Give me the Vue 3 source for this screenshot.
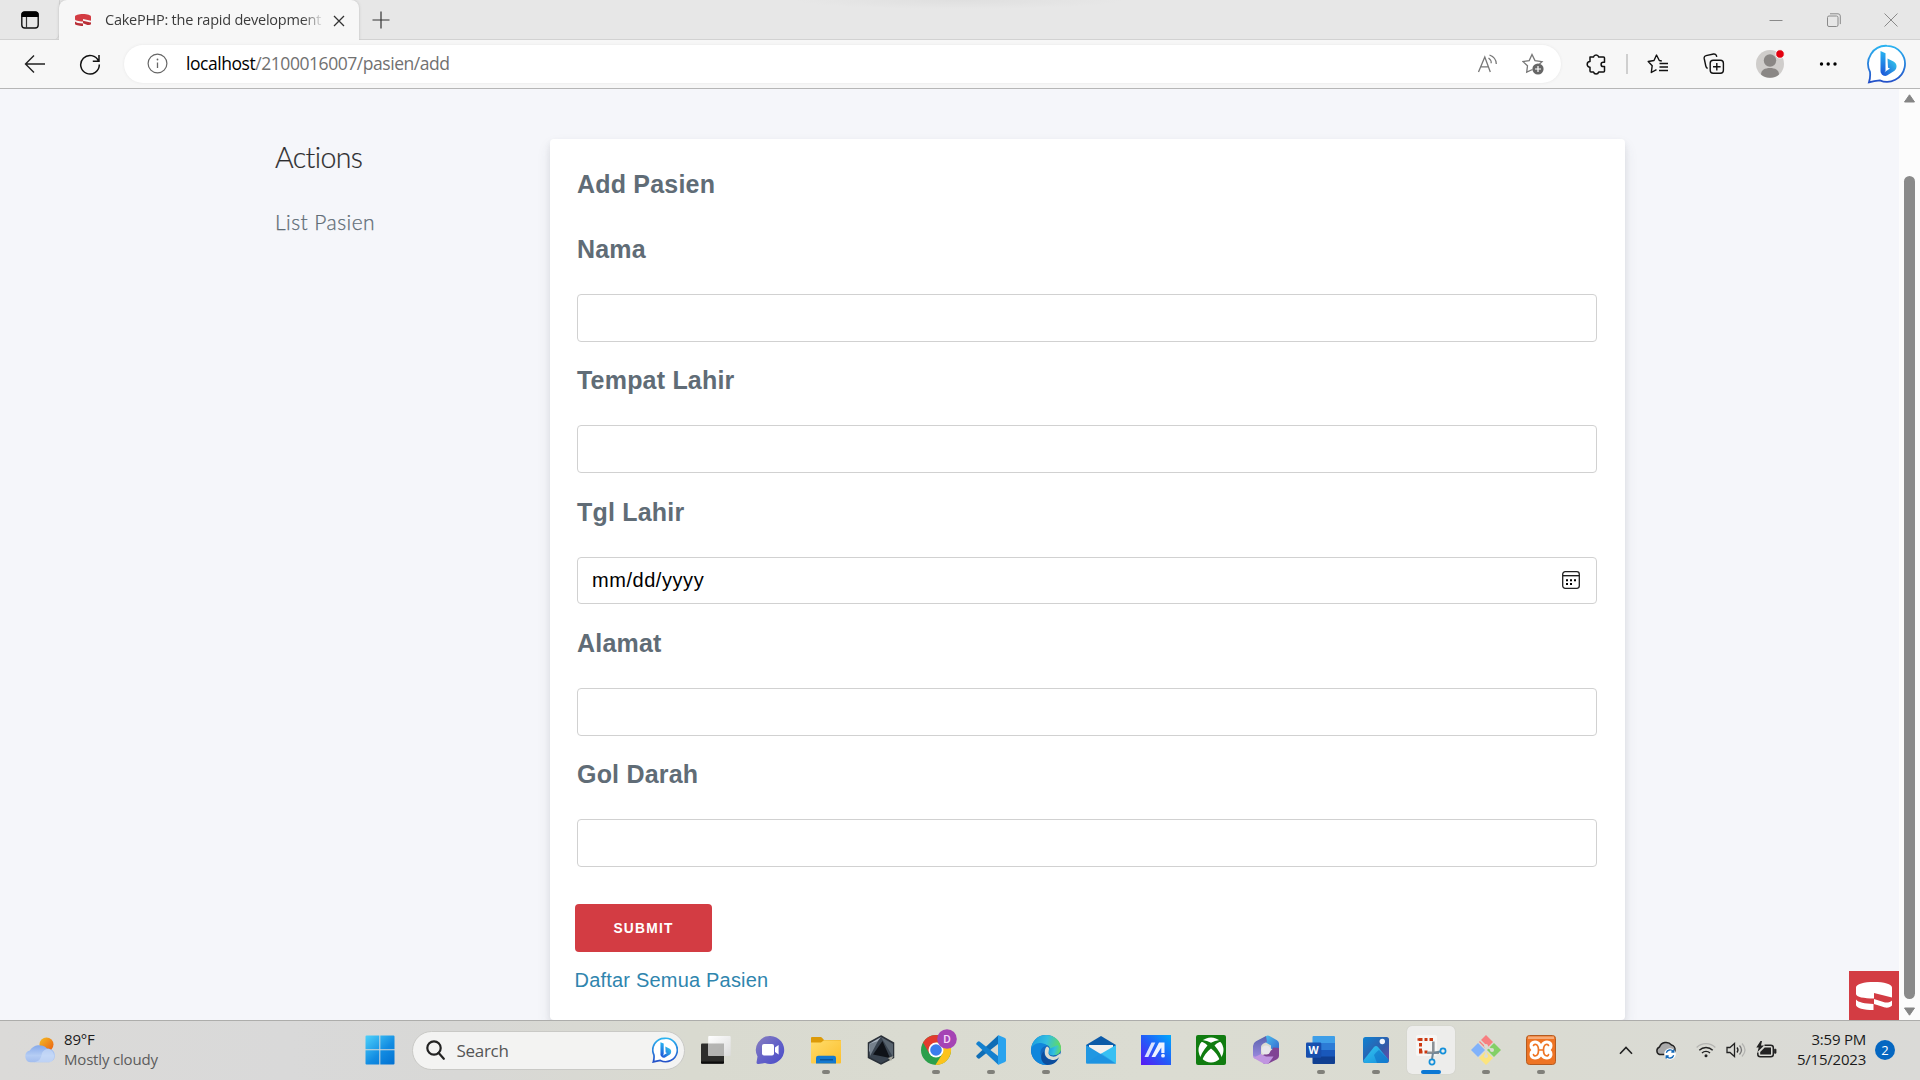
<script setup>
const fields = [
  { label: 'Nama', type: 'text' },
  { label: 'Tempat Lahir', type: 'text' },
  { label: 'Tgl Lahir', type: 'date' },
  { label: 'Alamat', type: 'text' },
  { label: 'Gol Darah', type: 'text' },
]
</script>

<template>
  <div class="screen">
    <header class="tabstrip">
      <div class="tab-menu">
        <svg width="20" height="20" viewBox="0 0 20 20"><rect x="1.8" y="2" width="16.4" height="16" rx="3" fill="none" stroke="#111" stroke-width="1.4"/><path d="M1.5 7V4.5A3 3 0 0 1 4.500 1.500h11A3 3 0 0 1 18.500 4.500V7z" fill="#000"/><path d="M6.500 7v11" stroke="#333" stroke-width="1.200"/></svg>
      </div>
      <div class="tab">
        <svg class="favicon" width="16" height="14" viewBox="0 0 36 27"><path fill="#d33c43" d="M18 0C8 0 0 2.500 0 6v6c0 3 8 5 18 5v-6l18 4V6c0-3.500-8-6-18-6z"/><path fill="#b92f37" d="M0 17c2 3 9 4.500 18 4.500V27C8 27 0 25 0 22zM18 15l17 4 1-1v5c-3 2-6 2-8 2l-10-4z"/></svg>
        <span class="tab-title">CakePHP: the rapid development</span>
        <svg class="tab-close" width="12" height="12" viewBox="0 0 12 12"><path d="M1 1l10 10M11 1L1 11" stroke="#333" stroke-width="1.300"/></svg>
      </div>
      <svg class="new-tab" width="18" height="18" viewBox="0 0 18 18"><path d="M9 .5v17M.5 9h17" stroke="#333" stroke-width="1.200"/></svg>
      <div class="window-controls">
        <svg width="14" height="14" viewBox="0 0 14 14"><path d="M.5 7.500h13" stroke="#8a8a8a"/></svg>
        <svg width="14" height="14" viewBox="0 0 14 14" fill="none" stroke="#8a8a8a"><rect x=".5" y="3" width="10.500" height="10.500" rx="1.500"/><path d="M3 .8h8a2.300 2.300 0 0 1 2.300 2.300v8"/></svg>
        <svg width="14" height="14" viewBox="0 0 14 14"><path d="M.5.5l13 13M13.500.5l-13 13" stroke="#8a8a8a"/></svg>
      </div>
    </header>

    <nav class="toolbar">
      <svg class="back" width="22" height="20" viewBox="0 0 22 20" fill="none" stroke="#222" stroke-width="1.400"><path d="M21 10H2M10 1.500L1.500 10 10 18.500"/></svg>
      <svg class="reload" width="22" height="22" viewBox="0 0 22 22" fill="none" stroke="#111" stroke-width="1.500"><path d="M19.600 8.200A9.300 9.300 0 1 0 20.300 11.500M20 2v6.200h-6.200"/></svg>
      <div class="address">
        <svg class="info" width="21" height="21" viewBox="0 0 21 21"><circle cx="10.500" cy="10.500" r="9.400" fill="none" stroke="#666" stroke-width="1.200"/><path d="M10.500 9.500v5.500" stroke="#666" stroke-width="1.300"/><circle cx="10.500" cy="6.500" r=".9" fill="#666"/></svg>
        <span class="url"><b>localhost</b>/2100016007/pasien/add</span>
        <svg class="read" width="22" height="20" viewBox="0 0 22 20" fill="none" stroke="#777" stroke-width="1.300"><path d="M1.500 18L7.800 3l5.500 15M3.800 12.800h7.600M11.500 4c2 1.300 2.800 3.200 2.700 5.300M12.500 1c4.500 1.700 6.800 4.600 6.800 9"/></svg>
        <svg class="fav-add" width="22" height="22" viewBox="0 0 22 22"><path d="M10.500 16.500l-5.800 2.700.8-6.400L1 8.600l6.200-1L10 1.500l3 6.100 7 1-2.500 2.300" fill="none" stroke="#777" stroke-width="1.300"/><circle cx="16" cy="16" r="5.600" fill="#666"/><path d="M16 13v6M13 16h6" stroke="#fff" stroke-width="1.200"/></svg>
      </div>
      <div class="tool puzzle"><svg width="20" height="22" viewBox="0 0 20 22" fill="none" stroke="#111" stroke-width="1.500" stroke-linejoin="round"><path d="M4 4h3.500a2.700 2.700 0 0 1 5.200 0H17.500a1 1 0 0 1 1 1v4.300h-1.300a2 2 0 0 0 0 4.200h1.300V18a1 1 0 0 1-1 1h-4.800a2.700 2.700 0 0 1-5.200 0H5a1 1 0 0 1-1-1v-3.800a2.800 2.800 0 0 1 0-5.600z"/></svg></div>
      <i class="divider"></i>
      <div class="tool star"><svg width="22" height="20" viewBox="0 0 22 20" fill="none" stroke="#111" stroke-width="1.400" stroke-linejoin="round"><path d="M14.800 7L12.300 6.500 9.500 1 7 6.500 1.200 7.500 5.200 11.700 4.300 18.500 9.500 15.600M12.500 9.500H21M12.500 13H21M12 16.500h9"/></svg></div>
      <div class="tool coll"><svg width="22" height="22" viewBox="0 0 22 22" fill="none" stroke="#111" stroke-width="1.400"><path d="M4.600 15.500C3.500 15 3 14 2.800 13L1.200 5.500a2.500 2.500 0 0 1 1.900-2.900L10.500 1a2.500 2.500 0 0 1 3 2l.3.900"/><rect x="7.200" y="7.300" width="13.200" height="13" rx="3"/><path d="M13.800 10v7.600M10 13.800h7.600"/></svg></div>
      <div class="tool avatar"><svg width="30" height="30" viewBox="0 0 30 30"><circle cx="15" cy="15" r="14" fill="#cfcdcb"/><circle cx="15" cy="11.500" r="6.200" fill="#8a8785"/><path d="M6 25.500c0-4.500 4-6.500 9-6.500s9 2 9 6.500a14 14 0 0 1-18 0z" fill="#8a8785"/><circle cx="25" cy="5" r="4.300" fill="#e3000f" stroke="#f7f7f7" stroke-width="1"/></svg></div>
      <div class="tool more"><svg width="18" height="6" viewBox="0 0 18 6"><circle cx="2.500" cy="3" r="1.700"/><circle cx="9.200" cy="3" r="1.700"/><circle cx="16" cy="3" r="1.700"/></svg></div>
      <div class="tool bing">
        <svg width="40" height="40" viewBox="0 0 40 40">
          <defs>
            <linearGradient id="ring" x1="0" y1="0" x2="0" y2="1"><stop offset="0" stop-color="#2bb3f0"/><stop offset="1" stop-color="#2450c8"/></linearGradient>
            <linearGradient id="bstem" x1="0" y1="0" x2="0" y2="1"><stop offset="0" stop-color="#27b5f2"/><stop offset="1" stop-color="#1c55d8"/></linearGradient>
            <linearGradient id="bbowl" x1="1" y1="0" x2="0" y2="1"><stop offset="0" stop-color="#35d0ee"/><stop offset="1" stop-color="#1b50d6"/></linearGradient>
          </defs>
          <path d="M20 1.800a18 18 0 1 1-7.200 34.500Q7 37 2 38.300q1.600-5 1-10.500A18 18 0 0 1 20 1.800z" fill="#fff" stroke="url(#ring)" stroke-width="1.800"/>
          <path d="M13.500 7l5 2.300v17l-2 4.700c-2-.5-3-2-3-4z" fill="url(#bstem)"/><path d="M20.500 14.500l6 3c4 2 3.800 7 1 9.300L20 31.500c-2 1-4 .3-5.500-1.500l8.500-5.500-2-.8z" fill="url(#bbowl)"/>
        </svg>
      </div>
    </nav>

    <main class="page">
      <div class="content">
        <aside>
          <h4>Actions</h4>
          <a>List Pasien</a>
        </aside>
        <section class="card">
          <h3>Add Pasien</h3>
          <div v-for="f in fields" :key="f.label" class="field">
            <label>{{ f.label }}</label>
            <div class="input" :class="f.type">
              <template v-if="f.type === 'date'">
                <span>mm/dd/yyyy</span>
                <svg width="18" height="18" viewBox="0 0 18 18"><rect x=".7" y=".7" width="16.600" height="16.600" rx="2.500" fill="none" stroke="#222" stroke-width="1.300"/><path d="M1 4.700h16" stroke="#111" stroke-width="1.300"/><path d="M4 8.200h2v2H4zM8 8.200h2v2H8zM12 8.200h2v2h-2zM4 12h2v2H4zM8 12h2v2H8z"/></svg>
              </template>
            </div>
          </div>
          <button>SUBMIT</button>
          <a class="all">Daftar Semua Pasien</a>
        </section>
      </div>
      <div class="debug">
        <svg width="36" height="28" viewBox="0 0 36 28"><path fill="#fff" d="M18 0C8 0 0 2 0 5.500V12c0 3 8 4.500 18 4.500V11l18 4.500V5.500C36 2 28 0 18 0z"/><path fill="#fff" d="M0 17.500c2 3 9 4 17.500 4.500v6C8 28 0 26 0 23zM18 17l11 3.500c3 .3 6-.5 7-2v5c-1 1.500-4 2.500-7 2L18 22z"/></svg>
      </div>
      <div class="scrollbar">
        <svg width="11" height="9" viewBox="0 0 11 9"><path d="M5.500.8L10.500 8H.5z" fill="#858585" stroke="#858585" stroke-linejoin="round"/></svg>
        <i></i>
        <svg width="11" height="9" viewBox="0 0 11 9"><path d="M5.500 8.200L.5 1h10z" fill="#858585" stroke="#858585" stroke-linejoin="round"/></svg>
      </div>
    </main>

    <footer class="taskbar">
      <div class="weather">
        <svg width="30" height="26" viewBox="0 0 30 26">
          <defs><linearGradient id="sun" x1="0" y1="0" x2="1" y2="1"><stop offset="0" stop-color="#f5bd22"/><stop offset="1" stop-color="#ea5b12"/></linearGradient><linearGradient id="cl" x1="0" y1="0" x2="0" y2="1"><stop offset="0" stop-color="#86a9ea"/><stop offset=".6" stop-color="#b5cdf4"/><stop offset="1" stop-color="#a3bdee"/></linearGradient></defs>
          <circle cx="21.500" cy="7.500" r="7" fill="url(#sun)"/><path d="M6 25.300a6 6 0 0 1-1.200-11.800A11 11 0 0 1 22 11.500c4 0 8 2.500 8 7s-3.500 6.800-7 6.800z" fill="url(#cl)"/><path d="M17 16c2-4 6-5 9-3 4 2.500 5 12.300-3 12.300H8c4 0 8-2 9-9.300z" fill="#cfdff9" opacity=".6"/>
        </svg>
        <div class="weather-text"><p class="temp">89°F</p><p class="sky">Mostly cloudy</p></div>
      </div>

      <div class="apps">
        <svg class="start" width="30" height="30" viewBox="0 0 30 30"><defs><linearGradient id="win" gradientUnits="userSpaceOnUse" x1="0" y1="0" x2="26" y2="30"><stop offset="0" stop-color="#4fd3fb"/><stop offset=".6" stop-color="#128ce2"/><stop offset="1" stop-color="#0373d3"/></linearGradient></defs><path fill="url(#win)" d="M1.500.5h12.800v13.800H.5V1.500a1 1 0 0 1 1-1zM15.300.5h13.200a1 1 0 0 1 1 1v12.800H15.300zM.5 15.300h13.800v14.200H1.500a1 1 0 0 1-1-1zM15.300 15.300h14.200v13.200a1 1 0 0 1-1 1H15.300z"/></svg>
        <div class="search">
          <svg width="19" height="20" viewBox="0 0 19 20" fill="none" stroke="#222" stroke-width="2.200"><circle cx="8" cy="8" r="6.700"/><path d="M12.500 12.800l5.300 6" stroke-linecap="round"/></svg>
          <span>Search</span>
          <svg width="26" height="26" viewBox="0 0 40 40"><path d="M20 2a18 18 0 1 1-7.200 34Q7 37 2 38.300q1.600-5 1-10.500A18 18 0 0 1 20 2z" fill="#fff" stroke="url(#ring)" stroke-width="2.600"/><path d="M13 8l5 2v16l-2 4.500c-2-.5-3-2-3-4z" fill="url(#bstem)"/><path d="M20.500 14.500l6 3c4 2 3.800 7 1 9.300L20 31.500c-2 1-4 .3-5.500-1.500l8.500-5.500-2-.8z" fill="url(#bbowl)"/></svg>
        </div>

        <!-- task view -->
        <div class="slot"><svg viewBox="0 0 48 48"><defs><linearGradient id="tv" x1="0" y1="0" x2="1" y2="1"><stop offset="0" stop-color="#fff"/><stop offset="1" stop-color="#dcdcdc"/></linearGradient></defs><rect x="9" y="17.500" width="23" height="20" rx="1" fill="#2d2d2b"/><path d="M9 35.500h23v1.300a1 1 0 0 1-1 1H10a1 1 0 0 1-1-1z" fill="#0c0c0c"/><rect x="16.200" y="10" width="22.500" height="20" rx="1" fill="url(#tv)"/><path d="M16.200 17.500H32V30H17a1 1 0 0 1-.8-1z" fill="#a9a9a7" opacity=".85"/></svg></div>
        <!-- chat -->
        <div class="slot"><svg viewBox="0 0 48 48"><defs><linearGradient id="ch" x1="0" y1="0" x2="1" y2="1"><stop offset="0" stop-color="#8a80bd"/><stop offset=".5" stop-color="#6462c8"/><stop offset="1" stop-color="#4a4cc8"/></linearGradient></defs><path d="M23.500 10a14 14 0 1 1-5.500 27l-6.500 1q-2 .2-2-1.500l1-6A14 14 0 0 1 23.500 10z" fill="url(#ch)"/><rect x="15" y="18" width="12" height="11.500" rx="2" fill="#fff"/><path d="M28 21.500l3.600-2.500v9.500L28 26z" fill="#fff"/></svg></div>
        <!-- file explorer -->
        <div class="slot"><svg viewBox="0 0 48 48"><defs><linearGradient id="fo" x1="0" y1="0" x2="1" y2="1"><stop offset="0" stop-color="#ffdc6b"/><stop offset="1" stop-color="#fcbf2c"/></linearGradient></defs><path d="M9 12q0-1 1-1h8.500q1 0 1.500.8L22 14h16q1 0 1 1v4H9z" fill="#dc9a08"/><path d="M9 16.500h10l3-2.300h17v22q0 1.300-1 1.300H10q-1 0-1-1.300z" fill="url(#fo)"/><path d="M14 37.500V32q0-2.300 2.300-2.300h15.400Q34 29.700 34 32v5.500z" fill="#1379cf"/><path d="M18 33.800h13" stroke="#0a4c90" stroke-width="1.200"/></svg><i></i></div>
        <!-- hexagon -->
        <div class="slot"><svg viewBox="0 0 48 48"><path d="M24 10l12.500 7v14.500L24 38l-12.500-6.500V17z" fill="#39434f" stroke="#2a3038" stroke-width="1.500"/><path d="M24 11l-12 7v8z" fill="#aab4c0"/><path d="M24 11l12 7v13z" fill="#59646f"/><path d="M12 18l9-3-8 15z" fill="#75808c"/><path d="M25.500 15l7.500 17-17-3.500z" fill="#0f1218"/><path d="M31 32l5.500-2-2.500 5z" fill="#a9a99f"/></svg></div>
        <!-- chrome -->
        <div class="slot"><svg viewBox="0 0 48 48"><circle cx="24" cy="24" r="15" fill="#2b9f4b"/><path d="M11 16.500a15 15 0 0 1 26 0H24l-6.500 11.250z" fill="#e33b2e"/><path d="M37 16.500A15 15 0 0 1 23.400 39l7.100-11.250L24 16.500z" fill="#fcc31b"/><circle cx="24" cy="24" r="7.500" fill="#fff"/><circle cx="24" cy="24" r="5.800" fill="#3b7ded"/><circle cx="35" cy="13" r="9.800" fill="#a543b4"/><text x="35" y="17" text-anchor="middle" font-family="Roboto, sans-serif" font-size="11.500" font-weight="500" fill="#f6d8fa">D</text></svg><i></i></div>
        <!-- vs code -->
        <div class="slot"><svg viewBox="0 0 48 48"><path d="M9.500 29.500L31 9.500v8.500L12.500 32.500q-1 .5-1.800-.3l-1.200-1.200q-.6-.8 0-1.500z" fill="#0f6db5"/><path d="M9.500 18.500L31 38.500V30L12.500 15.500q-1-.5-1.800.3l-1.200 1.200q-.6.800 0 1.500z" fill="#1380cf"/><path d="M31 9l7 3q1 .6 1 1.800v20.400q0 1.200-1 1.800l-7 3z" fill="#2aa3ee"/></svg><i></i></div>
        <!-- edge -->
        <div class="slot"><svg viewBox="0 0 48 48"><defs><linearGradient id="ed" x1="0" y1=".3" x2="1" y2=".5"><stop offset="0" stop-color="#1a9de0"/><stop offset=".5" stop-color="#33bfe0"/><stop offset="1" stop-color="#66dd58"/></linearGradient></defs><circle cx="24" cy="24" r="15" fill="#1268bf"/><path d="M9.200 22C10.500 13.500 17 9 24 9c9 0 15 6.500 15 13 0 5-4 7.500-8 7.200-3 0-4.500-1.500-4-2.700 2-2 1.500-7.500-4-8-6-.7-12 1.500-13.800 5.500z" fill="url(#ed)"/><path d="M9 24c.5-4.500 5-7.500 10-7 3 .3 5 1.500 6 3-6 0-8 6-5.500 11 2.500 5 8 6.500 13 5.300A15 15 0 0 1 9 24z" fill="#1086dc"/><path d="M25 20.500c3 1 3 5 1.700 6.500-.4 2.300 3 4.500 7.300 3.300l4.500-3 .5 3-2.200 1.500-2 2c-6 1.500-12-2-12-7 0-3 .5-5 2.200-6.300z" fill="#dcdcd2"/><path d="M26.500 26c-.4 2 1.200 3.200 4.500 3.200 4 0 8-2.200 8-7.200l-3-3-9 4z" fill="url(#ed)"/><path d="M22 25c0 7 5 9.500 10 9 3-.3 4.500-2 5-3.500-1.200 5-5.500 8.500-12 8.500-6-2-8-9-3-14z" fill="#0d4e9d"/></svg><i></i></div>
        <!-- mail -->
        <div class="slot"><svg viewBox="0 0 48 48"><path d="M24 10l15 9v4H9v-4z" fill="#0b5aa8"/><path d="M12 19h24v9l-12 6-12-6z" fill="#f2f0ee"/><path d="M9 19l30 18.500H10q-1 0-1-1z" fill="#2097e2"/><path d="M39 19v17.500q0 1-1 1L23.500 28z" fill="#37c0f3"/><path d="M9 37.500L24 27.500l15 10z" fill="#1c91e0" opacity=".75"/></svg></div>
        <!-- myasus -->
        <div class="slot"><svg viewBox="0 0 48 48"><defs><linearGradient id="ma" x1="0" y1="1" x2="1" y2="0"><stop offset="0" stop-color="#5a18f4"/><stop offset=".5" stop-color="#225cf8"/><stop offset="1" stop-color="#00a9fd"/></linearGradient></defs><path d="M9 9h30v30H9z" fill="url(#ma)"/><path d="M12.500 31l7-14.500h3.800l-7 14.500z" fill="#d9e3ff"/><path d="M19.500 31l7.500-14.500h5.500v10.500h-3.200v-5.500L23.300 31z" fill="#edf2ff"/><circle cx="31" cy="29.700" r="1.900" fill="#edf2ff"/></svg></div>
        <!-- xbox -->
        <div class="slot"><svg viewBox="0 0 48 48"><rect x="9" y="9" width="30" height="30" rx="2" fill="#107c10"/><circle cx="24" cy="24" r="12.500" fill="#fff"/><path d="M14.500 14.500q4-1 9.500 2.300Q29.500 13.500 33.500 14.500l1.500 1.500q-3-.8-7.500 3.500Q34 27 35 33l-2 1.500Q30 27 24 22.500 18 27 15 34.500L13 33q1-6 7.500-13.500-4.500-4.300-7.500-3.500z" fill="#107c10"/></svg></div>
        <!-- microsoft 365 -->
        <div class="slot"><svg viewBox="0 0 48 48"><defs><linearGradient id="m1" x1="0" y1="0" x2="1" y2="1"><stop offset="0" stop-color="#4cc0ee"/><stop offset="1" stop-color="#3360cc"/></linearGradient><linearGradient id="m2" x1="0" y1="0" x2="0" y2="1"><stop offset="0" stop-color="#5a62ae"/><stop offset="1" stop-color="#9c8be0"/></linearGradient></defs><path d="M24 10q2-1 4 .3l7 4q2 1.200 2 3.200v10l-8-5v-3l-6-3.500z" fill="url(#m1)"/><path d="M24 10l-10 5.300q-3 1.700-3 4.700v9.500q0 2 2 3.200l6-4.200V21q0-2 2-3.200l4-2z" fill="url(#m2)"/><path d="M37 22v8q0 2-2 3.200l-8.500 4.300q-2.500 1-5 0l-2-7.500 9.500-5.500q2-1 2-3z" fill="#804494"/><path d="M12.500 32.500q-1.500-1-1.500-3 1.500 2 4 .5l4-2 5 2.500 7.500 0-5 7q-2.500 1-5 0z" fill="#c095e0"/><circle cx="24" cy="24" r="4.600" fill="#e8e6ea"/></svg></div>
        <!-- word -->
        <div class="slot"><svg viewBox="0 0 48 48"><path d="M15.500 11q0-1 1-1H37q1 0 1 1v6.500H15.500z" fill="#3e9ee8"/><path d="M15.500 17h22.500v7H15.500z" fill="#2c7bd6"/><path d="M15.500 24h22.500v7H15.500z" fill="#1958bb"/><path d="M15.500 30.500h22.500V37q0 1-1 1H16.500q-1 0-1-1z" fill="#103f91"/><rect x="9" y="16.500" width="15.300" height="15.300" rx="1.300" fill="#184fae"/><text x="16.600" y="28" text-anchor="middle" font-family="Open Sans, sans-serif" font-weight="700" font-size="10.500" fill="#fff">W</text></svg><i></i></div>
        <!-- photos -->
        <div class="slot"><svg viewBox="0 0 48 48"><defs><linearGradient id="ph" x1="0" y1="0" x2="1" y2="1"><stop offset="0" stop-color="#0f82d2"/><stop offset=".6" stop-color="#325ba8"/><stop offset="1" stop-color="#6f4bab"/></linearGradient><linearGradient id="mo" x1="0" y1="0" x2="1" y2="1"><stop offset="0" stop-color="#35c5ef"/><stop offset="1" stop-color="#148ddc"/></linearGradient></defs><rect x="11" y="11" width="26" height="26" rx="2.500" fill="url(#ph)"/><path d="M11.300 34.500L22 21q2-2 4 0l10.800 13Q36.500 37 34 37H13.500Q11 37 11.300 34.500z" fill="url(#mo)"/><path d="M25 37l-3-8q2-3 5-5l9.800 10Q36 37 34 37z" fill="#0f6cc2" opacity=".55"/><circle cx="30.300" cy="15.500" r="2.700" fill="#f2f6fc"/></svg><i></i></div>
        <!-- snipping tool -->
        <div class="slot active"><svg viewBox="0 0 48 48"><rect x="9" y="9" width="21" height="21" rx="2" fill="#fafafa" opacity=".7"/><path d="M12 14.800v-2.500M12 13.500h3.500M17.500 13.500h3M22.500 13.500h3.500M13.500 17v3.500M13.500 22.500v3.500M12 26h3.500M17.500 26h3" stroke="#cc3911" stroke-width="3" fill="none"/><path d="M26.300 15.500V28M20 26.800h12" stroke="#8c9196" stroke-width="2.600"/><path d="M26 27l-1 6M27 27l6-1.500" stroke="#6f8798" stroke-width="2"/><circle cx="25" cy="36" r="2.600" fill="none" stroke="#1490da" stroke-width="1.700"/><circle cx="36" cy="25" r="2.600" fill="none" stroke="#1490da" stroke-width="1.700"/></svg><i></i></div>
        <!-- git -->
        <div class="slot"><svg viewBox="0 0 48 48"><path d="M24 9l7 7-7 7-7-7z" fill="#f77f80"/><path d="M16 17l7 7-7 7-7-7z" fill="#80b2fb"/><path d="M32 17l7 7-7 7-7-7z" fill="#83d066"/><path d="M24 25l7 7-7 7-7-7z" fill="#fbe47f"/><path d="M18 14l6 6v10M24 20l6 4" stroke="#dcdcd4" stroke-width="1.600" fill="none"/><circle cx="24" cy="20" r="2" fill="#dcdcd4"/><circle cx="30" cy="24" r="2" fill="#dcdcd4"/><circle cx="24" cy="30" r="2" fill="#dcdcd4"/></svg><i></i></div>
        <!-- xampp -->
        <div class="slot"><svg viewBox="0 0 48 48"><rect x="9.500" y="9.500" width="29" height="29" rx="3" fill="#ee7424" stroke="#b45b20"/><path d="M11 10.500h26v2.500H11z" fill="#f6ab78"/><path d="M18 14.500q4 0 6 3.500 2-3.500 6-3.500 5.500.5 5.500 5.200 0 2.800-1.800 4.300 1.800 1.500 1.800 4.300 0 4.700-5.500 5.200-4 0-6-3-2 3-6 3-5.500-.5-5.500-5.200 0-2.800 1.800-4.300-1.800-1.500-1.800-4.300 0-4.700 5.500-5.200z" fill="#fff"/><path d="M16.500 19.500q.5-1.500 2.500-1 2.500 1 2.500 5.500h5q0-4.500 2.500-5.500 2-.5 2.500 1M16.500 28.500q.3 1.800 2.300 1.300 2.700-.8 2.700-5.800M31.500 28.500q-.3 1.800-2.300 1.300-2.700-.8-2.700-5.800" stroke="#ee7424" stroke-width="1.700" fill="none" stroke-linecap="round"/></svg><i></i></div>
      </div>

      <div class="tray">
        <svg class="chev" width="14" height="9" viewBox="0 0 14 9"><path d="M1 7.800L7 1.500l6 6.300" fill="none" stroke="#222" stroke-width="1.600"/></svg>
        <svg class="cloud" width="22" height="20" viewBox="0 0 22 20"><path d="M4.500 14.500a4 4 0 0 1 0-7.500 7 7 0 0 1 12-2 4.500 4.500 0 0 1 3.500 5c0 2.500-1.500 4.500-4 4.500z" fill="#aaa" stroke="#222" stroke-width="1.500"/><circle cx="15" cy="14" r="5.800" fill="#fff"/><path d="M11.300 12.800a4 4 0 0 1 7-1.300M18.700 15.200a4 4 0 0 1-7 1.300M18.800 9.500v2.500h-2.500M11.200 18.500V16h2.500" fill="none" stroke="#1268b8" stroke-width="1.300"/></svg>
        <svg class="wifi" width="20" height="16" viewBox="0 0 20 16" fill="none" stroke="#222" stroke-width="1.400"><path d="M.7 5.500a13 13 0 0 1 18.600 0" stroke="#b5b5b2"/><path d="M3.300 8.300a9.500 9.500 0 0 1 13.400 0M6 11a5.700 5.700 0 0 1 8 0"/><circle cx="10" cy="13.700" r="1.500" fill="#222" stroke="none"/></svg>
        <svg class="sound" width="21" height="16" viewBox="0 0 21 16" fill="none" stroke="#222" stroke-width="1.300"><path d="M1 5.500h3L8.500 1.500v13L4 10.500H1zM11 5.500q2 2.500 0 5"/><path d="M13.500 3.500q4 4.500 0 9" stroke="#777"/><path d="M16 1.500q6 6.500 0 13" stroke="#b5b5b2"/></svg>
        <svg class="battery" width="21" height="18" viewBox="0 0 21 18"><path d="M8.500 4.200h6.300q2.500 0 2.500 2.500v6.600q0 2.500-2.500 2.500H4.300q-2.500 0-2.500-2.500V11.500" fill="none" stroke="#222" stroke-width="1.500"/><path d="M4.200 13.500v-2.500l4.500-4.500H15v7z" fill="#222"/><path d="M18.500 8.200v4h1.500v-4z" fill="#222" stroke="#222" stroke-width=".8"/><path d="M4.500 0L.3 6.500h2.400L1.500 11 8 4.500H5L6 0z" fill="#222"/></svg>
        <div class="clock"><p>3:59 PM</p><p>5/15/2023</p></div>
        <span class="count">2</span>
      </div>
    </footer>
  </div>
</template>

<style>
body { margin: 0; overflow: hidden; }
</style>

<style scoped>
* { box-sizing: border-box; }
svg { display: block; flex: none; }
p { margin: 0; }
.screen { width: 1920px; height: 1080px; display: flex; flex-direction: column; overflow: hidden; font-family: "Open Sans", "Noto Sans", sans-serif; }

.tabstrip { height: 40px; flex: none; display: flex; align-items: center; background: linear-gradient(#d2d2d2, #d2d2d2) 0 39px / 100% 1px no-repeat, radial-gradient(ellipse 165px 9px at 960px 0, #dfdfdf, #e7e7e7); }
.tab-menu { width: 59px; height: 40px; padding: 10px 0 0 20px; border-bottom-right-radius: 7px; box-shadow: 1px 0 1px #cfcfcf; }
.tab { width: 300px; height: 40px; display: flex; align-items: center; background: #f7f7f7; border-radius: 8px 8px 0 0; padding: 0 14px 0 16px; box-shadow: 0 0 3px #bbb; clip-path: inset(0 -4px 0 -4px); }
.tab-title { width: 218px; margin-left: 14px; font-size: 14.5px; letter-spacing: -0.23px; line-height: 20px; color: #3b3b3b; white-space: nowrap; overflow: hidden; -webkit-mask-image: linear-gradient(90deg, #000 91%, transparent 101%); mask-image: linear-gradient(90deg, #000 91%, transparent 101%); }
.tab-close { margin-left: 11px; margin-top: 1px; }
.new-tab { margin-left: 13px; }
.window-controls { margin-left: auto; margin-right: 22px; display: flex; gap: 43.500px; }

.toolbar { height: 49px; flex: none; display: flex; align-items: center; background: #f7f7f7; border-bottom: 1px solid #b6b6b6; padding-bottom: 1px; position: relative; z-index: 1; }
.back { margin-left: 24px; }
.reload { margin-left: 33px; }
.address { width: 1437px; height: 38px; flex: none; margin-left: 23px; display: flex; align-items: center; background: #fff; border-radius: 19px; box-shadow: 0 0 3px #e6e6e6; padding-left: 23px; }
.url { margin-left: 18px; width: 1291px; font-size: 17.5px; letter-spacing: -0.45px; line-height: 24px; padding-bottom: 1px; color: #717171; white-space: nowrap; }
.url b { font-weight: 400; color: #000; }
.fav-add { margin-left: 23px; }
.tool { flex: none; display: flex; justify-content: center; align-items: center; }
.puzzle { width: 50px; margin-left: 10px; }
.divider { width: 2px; height: 20px; flex: none; margin-left: 5px; background: #cfcfcf; }
.star { width: 60px; }
.coll { width: 51px; }
.avatar { width: 62px; }
.more { width: 53px; }
.bing { width: 66px; }

.page { height: 931px; flex: none; display: flex; background: #f5f6fa; position: relative; overflow: hidden; }
.content { width: 1899px; padding: 50px 274px 0; display: flex; font-family: "Liberation Sans", Arial, sans-serif; }
aside { width: 276px; padding-left: 1px; font-family: Lato, sans-serif; font-weight: 300; display: flex; flex-direction: column; }
aside h4 { margin: 0; font-weight: 300; font-size: 28.500px; line-height: 36px; color: #2d2d2f; letter-spacing: -0.6px; -webkit-text-stroke: .2px #2d2d2f; }
aside a { margin-top: 34px; font-size: 21px; line-height: 26px; color: #606c76; letter-spacing: 0.45px; -webkit-text-stroke: .25px #606c76; }
.card { width: 1075px; height: 881px; background: #fff; border-radius: 4px; box-shadow: 0 7px 14px 0 rgba(60, 66, 87, .1), 0 3px 6px 0 rgba(0, 0, 0, .07); padding: 25px 28px 0 27px; display: flex; flex-direction: column; }
.card h3, .card label { margin: 0; font-size: 25px; line-height: 40px; font-weight: 700; color: #606c76; letter-spacing: 0.2px; display: block; }
.field { height: 131.250px; flex: none; padding-top: 25px; }
.field label { margin-bottom: 25px; }
.input { height: 48px; width: 1020px; border: 1px solid #d1d1d1; border-radius: 4px; display: flex; align-items: center; justify-content: space-between; padding: 0 16px 0 14px; font-size: 20px; letter-spacing: .55px; color: #000; }
.input.date { height: 47px; }
button { width: 137px; height: 48px; flex: none; margin: 44px 0 0 -2px; border: 0; border-radius: 4px; background: #d33c43; color: #fff; font: 700 13.750px/46px "Liberation Sans", Arial, sans-serif; letter-spacing: 1.250px; padding: 2px 0 0; }
.all { margin: 13.500px 0 0 -2.500px; font-size: 20px; line-height: 28px; letter-spacing: .2px; color: #2f85ae; }
.debug { position: absolute; right: 21px; bottom: 0; width: 50px; height: 49px; background: #d33c43; display: flex; align-items: center; justify-content: center; }
.scrollbar { width: 21px; background: #fcfcfc; display: flex; flex-direction: column; align-items: center; padding: 5px 0 5px; }
.scrollbar i { width: 11px; height: 823px; margin: 73px 0 8px; border-radius: 6px; background: #8a8a8a; flex: none; }

.taskbar { height: 60px; flex: none; border-top: 1px solid #adadab; padding-bottom: 1px; background: linear-gradient(90deg, #dbdad8 0, #d9d9d9 15%, #d8d8d6 24%, #d9dad0 36%, #dbdcd2 60%, #dadbd2 80%, #dadad7 100%); display: flex; align-items: center; }
.weather { width: 364.500px; padding-left: 25px; display: flex; align-items: center; gap: 9px; font-size: 15px; line-height: 20px; letter-spacing: -.18px; }
.weather-text { padding-bottom: 3px; }
.temp { color: #1b1b1b; }
.sky { color: #5c5c5c; }
.apps { display: flex; align-items: center; }
.search { width: 273px; height: 39px; margin: 0 4px 0 17px; background: #f3f3f2; border: 1px solid #c9c9c6; border-radius: 20px; display: flex; align-items: center; padding: 0 6px 0 13px; }
.search span { flex: 1; margin-left: 12px; font-size: 17px; letter-spacing: -.3px; color: #555; }
.slot { width: 55px; height: 48px; display: flex; flex-direction: column; align-items: center; position: relative; }
.slot svg { width: 48px; height: 48px; overflow: visible; border-radius: 5px; }
.slot i { position: absolute; bottom: 0; width: 8px; height: 4px; border-radius: 2px; background: #80807a; }
.slot.active svg { background: #ededeb; box-shadow: 0 0 1px #b8b8b4; }
.slot.active i { width: 20px; background: #0c78d4; }
.tray { margin-left: auto; display: flex; align-items: center; padding-right: 25px; }
.cloud { margin-left: 22px; }
.wifi { margin-left: 19px; }
.sound { margin-left: 10px; }
.battery { margin-left: 9px; }
.clock { width: 89px; padding-bottom: 3px; text-align: right; font-size: 15px; line-height: 20px; letter-spacing: -.22px; color: #1b1b1b; white-space: nowrap; }
.count { width: 20px; height: 20px; margin-left: 9px; border-radius: 50%; background: #0567c1; color: #fff; font-size: 13px; line-height: 20px; text-align: center; }
</style>
